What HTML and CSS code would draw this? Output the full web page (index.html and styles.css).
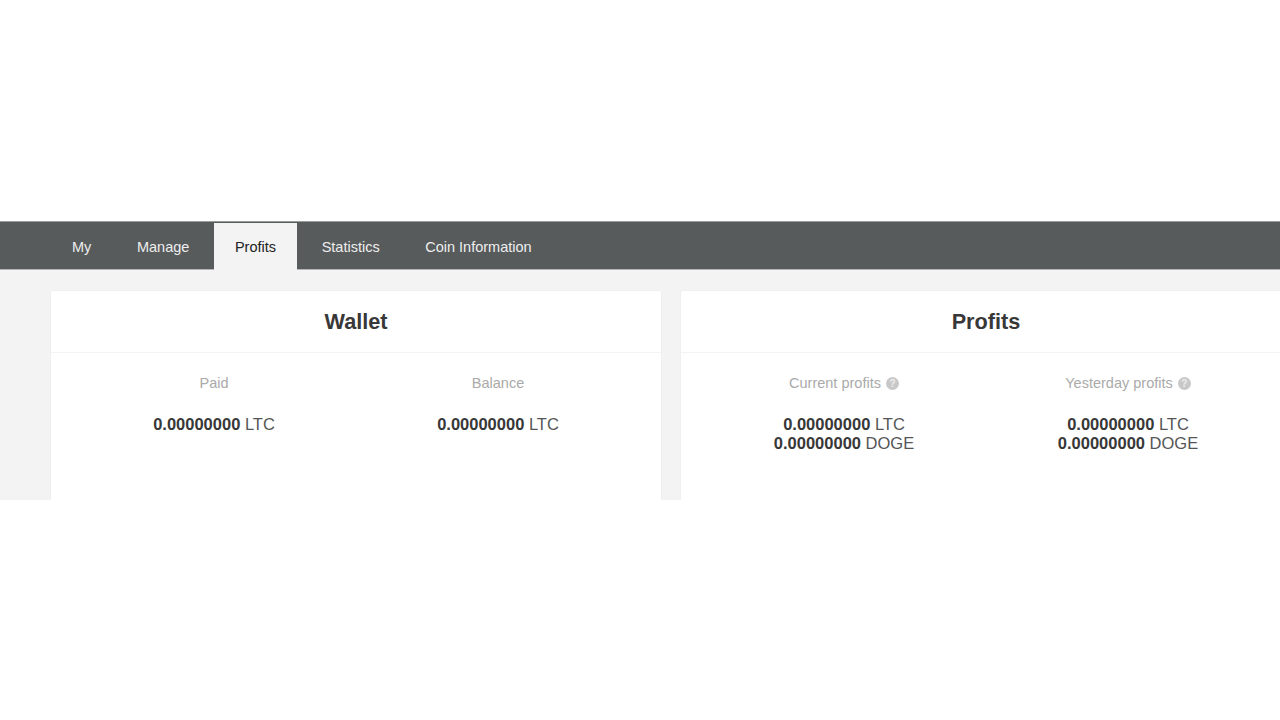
FILE: index.html
```html
<!DOCTYPE html>
<html lang="en">
<head>
    <meta charset="UTF-8">
    <title>Profits</title>
    <link rel="stylesheet" href="styles.css">
</head>
<body>
    <div class="page">
        <nav class="tabs">
            <a class="tab" href="#">My</a>
            <a class="tab" href="#">Manage</a>
            <a class="tab active" href="#">Profits</a>
            <a class="tab" href="#">Statistics</a>
            <a class="tab" href="#">Coin Information</a>
        </nav>

        <div class="content">
            <section class="card">
                <h2 class="card-title">Wallet</h2>
                <div class="card-body">
                    <div class="stat">
                        <div class="stat-label">Paid</div>
                        <div class="stat-value"><b>0.00000000</b> LTC</div>
                    </div>
                    <div class="stat">
                        <div class="stat-label">Balance</div>
                        <div class="stat-value"><b>0.00000000</b> LTC</div>
                    </div>
                </div>
            </section>

            <section class="card">
                <h2 class="card-title">Profits</h2>
                <div class="card-body">
                    <div class="stat">
                        <div class="stat-label">Current profits <span class="help">?</span></div>
                        <div class="stat-value"><b>0.00000000</b> LTC<br><b>0.00000000</b> DOGE</div>
                    </div>
                    <div class="stat">
                        <div class="stat-label">Yesterday profits <span class="help">?</span></div>
                        <div class="stat-value"><b>0.00000000</b> LTC<br><b>0.00000000</b> DOGE</div>
                    </div>
                </div>
            </section>
        </div>
    </div>
</body>
</html>
```

FILE: styles.css
```css
html, body {
    margin: 0;
    padding: 0;
    overflow: hidden;
    background-color: #fff;
}

body {
    font-family: "Liberation Sans", Arial, sans-serif;
    color: #333;
}

.page {
    padding-top: 221px;
}

.tabs {
    display: flex;
    gap: 3.6px;
    height: 46px;
    padding: 1px 0 0 51px;
    background-color: #575b5c;
    border-top: 1px solid #9a9d9d;
    border-bottom: 1px solid #b5b7b7;
}

.tab {
    display: flex;
    align-items: center;
    padding: 1px 21px 0;
    font-size: 14.5px;
    color: #eee;
    text-decoration: none;
}

.tab.active {
    background-color: #f3f3f3;
    color: #222;
    margin-bottom: -1px;
}

.content {
    display: grid;
    grid-template-columns: 610px 610px;
    gap: 20px;
    height: 209px;
    padding: 21px 0 0 51px;
    overflow: hidden;
    background-color: #f3f3f3;
}

.card {
    height: 300px;
    background-color: #fff;
    border-radius: 2px;
    box-shadow: 0 0 2px rgba(0, 0, 0, 0.06);
}

.card-title {
    margin: 0;
    height: 61px;
    line-height: 61px;
    font-size: 21.7px;
    text-align: center;
    color: #383838;
    border-bottom: 1px solid #f3f3f8;
}

.card-body {
    display: grid;
    grid-template-columns: 284px 284px;
    padding: 20px 21px 0;
    text-align: center;
}

.stat-label {
    height: 20px;
    line-height: 20px;
    font-size: 14.5px;
    color: #aaa;
}

.stat-value {
    margin-top: 22px;
    font-size: 16.5px;
    line-height: 19px;
    color: #555;
}

.stat-value b {
    color: #383838;
}

.help {
    display: inline-block;
    width: 13px;
    height: 13px;
    margin-left: 1px;
    border-radius: 50%;
    background-color: #c8c8c8;
    color: #eee;
    font-size: 10px;
    font-weight: bold;
    line-height: 13px;
    vertical-align: 1px;
}
```
